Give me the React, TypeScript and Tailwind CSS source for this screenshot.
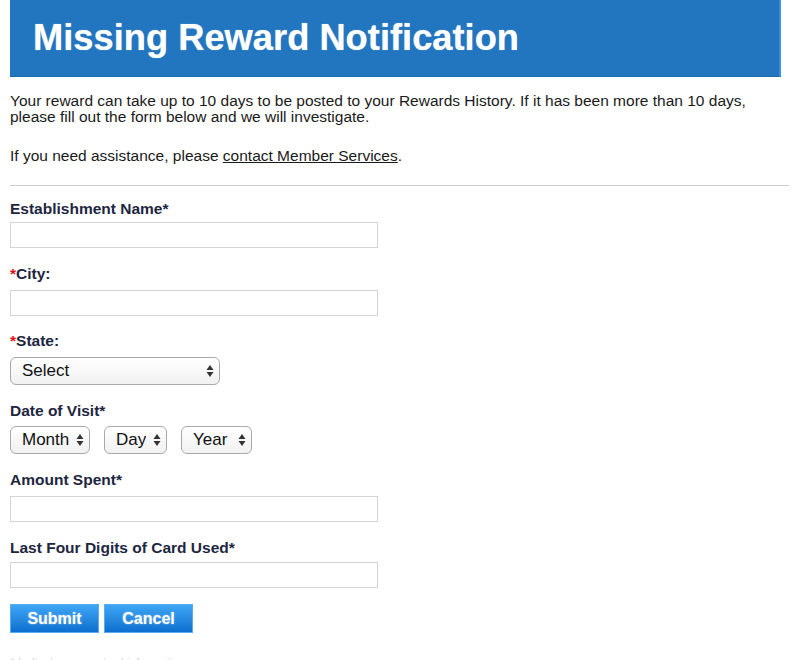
import React from "react";

const font = { fontFamily: '"Liberation Sans", Arial, Helvetica, sans-serif' };

function Arrows() {
  return (
    <svg width="8" height="14" viewBox="0 0 8 14" className="pointer-events-none absolute right-[6px] top-1/2 -translate-y-1/2">
      <path d="M4 1 L7.5 6 L0.5 6 Z" fill="#333" />
      <path d="M4 13 L7.5 8 L0.5 8 Z" fill="#333" />
    </svg>
  );
}

function Sel({ label, w }: { label: string; w: string }) {
  return (
    <div className={`relative ${w} h-[28px]`}>
      <select
        defaultValue={label}
        className="h-full w-full appearance-none rounded-[6px] border border-[#a9a9a9] bg-gradient-to-b from-white to-[#f1f1f1] pl-[11px] pr-5 text-[17px] text-[#111] outline-none"
        style={font}
      >
        <option>{label}</option>
      </select>
      <Arrows />
    </div>
  );
}

function Field({ children }: { children: React.ReactNode }) {
  return <div className="text-[15.5px] font-bold leading-4 text-[#1d2640]">{children}</div>;
}

function TextInput() {
  return <input className="h-[26px] w-[368px] border border-[#d4d4d4] bg-white outline-none" />;
}

function Btn({ children }: { children: React.ReactNode }) {
  return (
    <button
      className="h-[29px] w-[89px] border border-[#58adf0] bg-gradient-to-b from-[#3ea6f5] to-[#0b6fcf] text-[16px] font-bold text-white [text-shadow:0_0_2px_rgba(255,255,255,0.5)]"
      style={font}
    >
      {children}
    </button>
  );
}

export default function App() {
  return (
    <div className="h-[660px] w-[800px] overflow-hidden bg-white" style={font}>
      <div className="ml-[10px] mr-[19px] h-[77px] border-r-2 border-b border-r-[#3b8fe0] border-b-[#1a6ab3] bg-[#2276c0] pl-[23px] pt-[17px]">
        <h1 className="text-[36.3px] font-bold leading-[42px] text-white [text-shadow:0_0_1px_rgba(255,255,255,0.6)]">
          Missing Reward Notification
        </h1>
      </div>
      <div className="px-[10px] pt-[16px] text-[15.5px] leading-[16px] text-[#1a1a1a]">
        <p>
          Your reward can take up to 10 days to be posted to your Rewards History. If it has been more than 10 days,
          please fill out the form below and we will investigate.
        </p>
        <p className="mt-[23px]">
          If you need assistance, please <span className="underline">contact Member Services</span>.
        </p>
      </div>
      <div className="ml-[10px] mr-[11px] mt-[21px] h-[1px] bg-[#cccccc]" />
      <div className="px-[10px] pt-[15px]">
        <Field>Establishment Name*</Field>
        <div className="mt-[5px]"><TextInput /></div>
        <div className="mt-[18px]"><Field><span className="text-[#e01010]">*</span>City:</Field></div>
        <div className="mt-[8px]"><TextInput /></div>
        <div className="mt-[17px]"><Field><span className="text-[#e01010]">*</span>State:</Field></div>
        <div className="mt-[8px]"><Sel label="Select" w="w-[210px]" /></div>
        <div className="mt-[18px]"><Field>Date of Visit*</Field></div>
        <div className="mt-[7px] flex gap-[14px]">
          <Sel label="Month" w="w-[80px]" />
          <Sel label="Day" w="w-[63px]" />
          <Sel label="Year" w="w-[71px]" />
        </div>
        <div className="mt-[18px]"><Field>Amount Spent*</Field></div>
        <div className="mt-[8px]"><TextInput /></div>
        <div className="mt-[18px]"><Field>Last Four Digits of Card Used*</Field></div>
        <div className="mt-[6px]"><TextInput /></div>
        <div className="mt-[16px] flex gap-[5px]">
          <Btn>Submit</Btn>
          <Btn>Cancel</Btn>
        </div>
        <div className="mt-[23px] text-[12px] leading-[14px] text-[#d6d6d6]">
          * Indicates a required information.
        </div>
      </div>
    </div>
  );
}
